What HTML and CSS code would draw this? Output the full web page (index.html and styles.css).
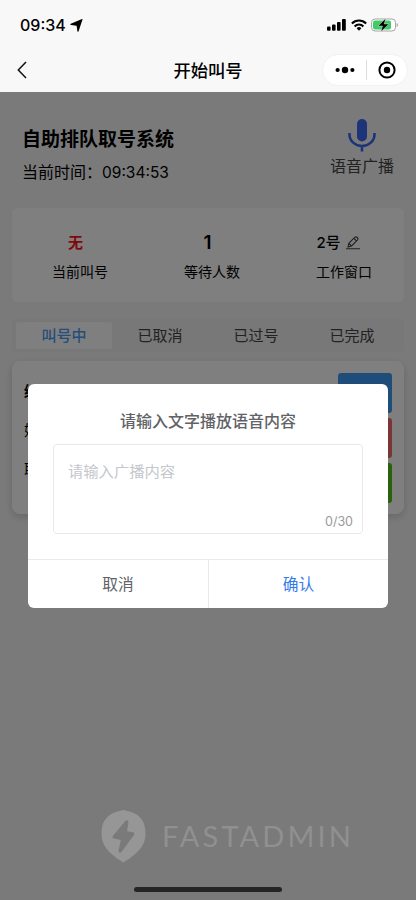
FILE: index.html
```html
<!DOCTYPE html>
<html lang="zh-CN">
<head>
<meta charset="utf-8">
<meta name="viewport" content="width=device-width, initial-scale=1">
<title>开始叫号</title>
<link rel="stylesheet" href="styles.css">
</head>
<body>
<div class="phone">
  <header class="top">
    <div class="status">
      <span class="clock">09:34</span>
      <svg class="locate" width="13" height="13" viewBox="0 0 13 13"><path d="M12.500.5 8.600 12.200q-.6 1-1.200 0L6.600 6.700 1 6.100Q-.3 5.500.8 4.700L12 .1q.8-.2.5.4z"/></svg>
      <div class="signals">
        <svg width="20" height="12" viewBox="0 0 20 12"><rect x="0" y="7.500" width="3.600" height="4.200" rx="1"/><rect x="5" y="5.400" width="3.600" height="6.300" rx="1"/><rect x="10" y="3" width="3.600" height="8.700" rx="1"/><rect x="15" y="0" width="3.800" height="11.700" rx="1"/></svg>
        <svg class="wifi" width="16" height="12" viewBox="0 0 16 12" fill="none" stroke="#000" stroke-width="2.100"><path d="M.9 4.500a10 10 0 0 1 14.200 0"/><path d="M3.600 7.400a6.200 6.200 0 0 1 8.800 0"/><path d="M5.600 9.300a3.400 3.400 0 0 1 4.800 0L8 11.800z" fill="#000" stroke="none"/></svg>
        <svg class="battery" width="28" height="14" viewBox="0 0 28 14"><rect x=".5" y="1" width="24" height="12" rx="3.500" fill="#fff" stroke="#a5a5a5"/><rect x="2" y="2.500" width="18" height="9" rx="2" fill="#3fcb66"/><path d="M25.700 5v4c1.600-.5 1.600-3.500 0-4z" fill="#999"/><path d="M14.800.3 7 8h4.500L9.900 13.800 17.800 6h-4.600z" stroke="#fff" stroke-width=".4"/></svg>
      </div>
    </div>
    <nav class="nav">
      <svg class="back" width="10" height="18" viewBox="0 0 10 18"><path d="M9 1 1.300 9 9 17" fill="none" stroke="#111" stroke-width="1.500"/></svg>
      <h1>开始叫号</h1>
      <div class="capsule">
        <svg width="20" height="8" viewBox="0 0 20 8"><circle cx="2.600" cy="4" r="2.100"/><circle cx="10" cy="4" r="3.200"/><circle cx="17.400" cy="4" r="2.100"/></svg>
        <i></i>
        <svg width="18" height="18" viewBox="0 0 18 18"><circle cx="9" cy="9" r="7.600" fill="none" stroke="#000" stroke-width="2"/><circle cx="9" cy="9" r="3.200"/></svg>
      </div>
    </nav>
  </header>

  <main class="page">
    <section class="hero">
      <div>
        <h2>自助排队取号系统</h2>
        <p>当前时间：<span>09:34:53</span></p>
      </div>
      <div class="voice">
        <svg width="28" height="33" viewBox="0 0 28 33"><rect x="9" y="0" width="10" height="22.500" rx="5" fill="#3b68f0"/><path d="M1.500 14v1.500a12.500 11.500 0 0 0 25 0V14M14 27v5.500" fill="none" stroke="#3b68f0" stroke-width="2.600"/></svg>
        <span>语音广播</span>
      </div>
    </section>

    <section class="stats">
      <div><b class="none">无</b><span>当前叫号</span></div>
      <div><b class="count">1</b><span>等待人数</span></div>
      <div><b class="desk">2号<svg width="14" height="14" viewBox="0 0 14 14" fill="none" stroke="#444" stroke-width="1.100"><path d="M0 12.800h14M2 11l.8-3.700L9 1.200q1-.8 2.300.3 1.200 1.200.2 2.300L5.600 9.900zM8 2.500l2.500 2.300M2.900 7.400l2.600 2.400"/></svg></b><span>工作窗口</span></div>
    </section>

    <div class="tabs">
      <span class="active">叫号中</span><span>已取消</span><span>已过号</span><span>已完成</span>
    </div>

    <section class="ticket">
      <div class="fields"><span>编号</span><span>姓名</span><span>取号</span></div>
      <div class="actions"><i class="blue"></i><i class="red"></i><i class="green"></i></div>
    </section>
  </main>

  <div class="mask">
    <div class="dialog">
      <h3>请输入文字播放语音内容</h3>
      <div class="input"><span class="hint">请输入广播内容</span><span class="limit">0/30</span></div>
      <div class="buttons"><span>取消</span><span class="ok">确认</span></div>
    </div>
    <div class="brand">
      <svg width="45" height="53" viewBox="0 0 45 53"><path fill="#969696" fill-rule="evenodd" d="M22.500 0C28 1.200 33 2.500 37 5.500c6 5 7.500 11 7.500 18.500 0 14-12 22-22 28.500C12 46 .5 38 .5 24 .5 16.500 2 10.500 8 5.500 12 2.500 17 1.200 22.500 0zM24.500 10.700 11.800 26q-1 2 1 2.500l7 1.500-2.300 11q.8 3 3 1L33 25q1-2.300-1-2.800l-6-.9 1.500-9q-.5-3.200-3-1.600z"/></svg>
      <span>FASTADMIN</span>
    </div>
    <div class="home"></div>
  </div>
</div>
</body>
</html>
```
FILE: styles.css
```css
* { box-sizing: border-box; }
body, h1, h2, h3, p { margin: 0; }
body { font-family: Inter, "Noto Sans CJK SC", sans-serif; color: #000; }
svg { display: block; flex: none; }
.phone { position: relative; width: 416px; height: 900px; overflow: hidden; background: #f5f5f5; }

.top { height: 92px; background: #f8f8f8; }
.status { display: flex; align-items: center; height: 50px; padding: 0 17px 0 20px; }
.clock { font-size: 16px; line-height: 20px; font-weight: 500; width: 46px; }
.locate { margin-left: 4px; }
.signals { display: flex; align-items: center; margin-left: auto; }
.signals svg:first-child { margin-right: 1px; }
.wifi { margin-left: 3px; }
.battery { margin-left: 4px; }
.nav { display: grid; grid-template-columns: 1fr auto 1fr; align-items: center; height: 40px; padding: 0 8px 0 17px; }
.nav h1 { font-size: 17.300px; line-height: 24px; font-weight: 500; margin: 2px 9px 0; transform: translateX(-4.500px); }
.capsule { justify-self: end; width: 86px; height: 32px; border-radius: 16px; background: #fff; border: 1px solid #f2f2f2; display: flex; align-items: center; justify-content: space-between; padding: 0 11px 0 12px; }
.capsule i { width: 1px; height: 20px; background: #ddd; }

.page { padding: 0 12px; }
.hero { height: 116px; padding: 34px 10px 0 10px; display: flex; justify-content: space-between; }
.hero h2 { font-size: 19px; line-height: 28px; font-weight: 700; }
.hero p { font-size: 16px; line-height: 24px; margin-top: 6px; }
.hero p span { font-size: 15.500px; }
.voice { display: flex; flex-direction: column; align-items: center; margin-top: -7px; }
.voice span { font-size: 16px; line-height: 24px; margin-top: 2px; color: #444; }

.stats { height: 94px; border-radius: 6px; background: #fff; padding: 22px 0 0 2px; display: grid; grid-template-columns: repeat(3, 132px); overflow: hidden; }
.stats div { display: flex; flex-direction: column; align-items: center; }
.stats b { height: 26px; line-height: 26px; font-size: 15px; font-weight: 500; display: flex; align-items: center; }
.stats .none { color: #ff1010; font-weight: 700; margin-right: 9px; }
.stats .count { font-size: 19px; font-weight: 600; margin-right: 9px; }
.stats .desk { margin-right: 12px; }
.stats b svg { margin: 0 0 0 5px; }
.stats span { font-size: 14px; line-height: 20px; margin-top: 6px; }

.tabs { height: 33px; margin-top: 17px; padding: 3px 4px; display: grid; grid-template-columns: repeat(4, 1fr); background: #f0f0f0; border-radius: 2px; }
.tabs span { font-size: 15px; line-height: 27px; text-align: center; color: #444; }
.tabs .active { background: #fff; color: #4a9cf5; font-weight: 500; border-radius: 2px; }

.ticket { height: 153px; margin-top: 9px; padding: 12px; background: #fff; border-radius: 8px; box-shadow: 0 3px 8px rgba(0,0,0,.16); display: flex; justify-content: space-between; }
.fields { display: flex; flex-direction: column; font-size: 15px; line-height: 24px; gap: 15px; padding-top: 7px; }
.fields span:first-child { font-weight: 700; }
.actions { display: grid; grid-template-rows: repeat(3, 40px); row-gap: 5px; width: 54px; }
.actions i { border-radius: 3px; }
.blue { background: #3d9bf5; }
.red { background: #f56c6c; }
.green { background: #52c41a; }

.mask { position: absolute; inset: 92px 0 0 0; background: rgba(0,0,0,.5); display: flex; flex-direction: column; align-items: center; padding-top: 292px; }
.dialog { width: 360px; height: 224px; border-radius: 6px; background: #fff; overflow: hidden; }
.dialog h3 { height: 60px; padding-top: 25px; font-size: 16px; line-height: 24px; font-weight: 500; color: #606266; text-align: center; }
.input { height: 90px; margin: 0 25px; padding: 15px 9px 4px 14px; border: 1px solid #e8e8e8; border-radius: 4px; display: flex; flex-direction: column; justify-content: space-between; }
.hint { font-size: 15.300px; line-height: 24px; color: #c4c7cc; }
.limit { align-self: flex-end; font-size: 12.500px; line-height: 16px; margin-bottom: -1px; color: #999; }
.buttons { margin-top: 25px; height: 49px; display: grid; grid-template-columns: 1fr 1fr; border-top: 1px solid #eaeaea; }
.buttons span { font-size: 15.700px; line-height: 50px; text-align: center; color: #606266; }
.buttons .ok { color: #347be8; border-left: 1px solid #e8e8e8; }
.brand { display: flex; align-items: center; gap: 16px; margin-top: 202px; align-self: flex-start; margin-left: 101px; color: #909090; }
.brand span { font: 400 29px/36px Lato, sans-serif; letter-spacing: 3.100px; white-space: nowrap; margin-top: -1px; }
.home { width: 148px; height: 5px; border-radius: 3px; background: #252525; margin-top: 24px; }
```
